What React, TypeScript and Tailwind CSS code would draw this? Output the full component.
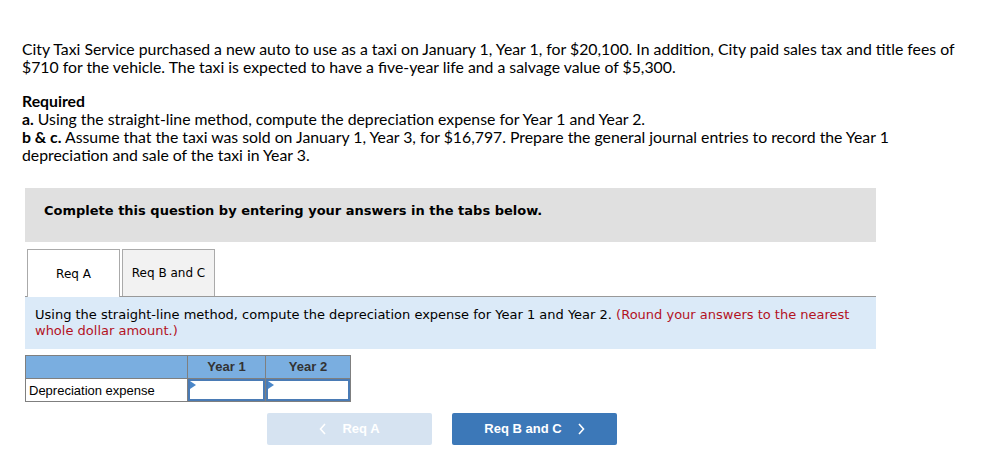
import React from 'react';

const bodyFont = { fontFamily: 'Lato, "Open Sans", sans-serif' };
const arial = { fontFamily: '"Liberation Sans", Arial, sans-serif' };

function AnswerCell() {
  return (
    <td className="relative h-[23px] border border-[#7f7f7f] p-0">
      <div className="h-full w-full border-2 border-[#4a7bb5] bg-white" />
      <span className="absolute left-[2px] top-[2px] h-0 w-0 border-y-[4px] border-l-[6px] border-y-transparent border-l-[#4a86c8]" />
    </td>
  );
}

function Chevron({ dir }: { dir: 'left' | 'right' }) {
  return (
    <svg width="8" height="12" viewBox="0 0 8 12" fill="none" stroke="white" strokeWidth="1.6">
      {dir === 'left' ? <polyline points="6,1 1.5,6 6,11" /> : <polyline points="2,1 6.5,6 2,11" />}
    </svg>
  );
}

export default function App() {
  return (
    <div className="min-h-[476px] bg-white pl-[22px] pr-[20px] pt-[40px] text-black">
      <div className="text-[15.8px] leading-[18px]" style={bodyFont}>
        <p className="w-[940px]">
          City Taxi Service purchased a new auto to use as a taxi on January 1, Year 1, for $20,100. In addition, City paid sales tax and title fees of
          $710 for the vehicle. The taxi is expected to have a five-year life and a salvage value of $5,300.
        </p>
        <p className="mt-[16px] w-[940px]">
          <b>Required</b>
          <br />
          <b>a.</b> Using the straight-line method, compute the depreciation expense for Year 1 and Year 2.
          <br />
          <b>b &amp; c.</b> Assume that the taxi was sold on January 1, Year 3, for $16,797. Prepare the general journal entries to record the Year 1
          depreciation and sale of the taxi in Year 3.
        </p>
      </div>

      <div className="ml-[3px] mt-[24px] w-[851px]" style={{ fontFamily: '"DejaVu Sans", Verdana, sans-serif' }}>
        <div className="flex h-[54px] items-center bg-[#e0e0e0] pb-[8px] pl-[19px] text-[13px] font-bold">
          Complete this question by entering your answers in the tabs below.
        </div>

        <div className="mt-[7px] flex items-end gap-[2px] border-b border-[#999] pl-[2px]">
          <div className="-mb-px flex h-[48px] w-[93px] items-center justify-center border border-b-0 border-[#aaa] bg-white text-[12px]">
            Req A
          </div>
          <div className="flex h-[47px] w-[93px] items-center justify-center border border-b-0 border-[#aaa] bg-[#f2f2f2] text-[12px]">
            Req B and C
          </div>
        </div>

        <div className="bg-[#dbeaf8] px-[10px] pb-[10px] pt-[10px] text-[13px] leading-[16px]">
          Using the straight-line method, compute the depreciation expense for Year 1 and Year 2.{' '}
          <span className="text-[#b3121f]">(Round your answers to the nearest whole dollar amount.)</span>
        </div>

        <table className="mt-[6px] border-collapse text-[13px]" style={arial}>
          <thead>
            <tr className="h-[23px] bg-[#7aaee0] font-bold text-[#333]">
              <th className="w-[162px] border border-[#7f7f7f]" />
              <th className="w-[78px] border border-[#7f7f7f]">Year 1</th>
              <th className="w-[85px] border border-[#7f7f7f]">Year 2</th>
            </tr>
          </thead>
          <tbody>
            <tr>
              <td className="h-[23px] border border-[#7f7f7f] px-[3px] pt-[2px] text-left">Depreciation expense</td>
              <AnswerCell />
              <AnswerCell />
            </tr>
          </tbody>
        </table>

        <div className="mt-[11px] flex gap-[20px] pl-[242px] text-[13px] font-bold text-white" style={arial}>
          <button className="flex h-[32px] w-[165px] items-center justify-center gap-[15px] rounded-[2px] bg-[#d6e3f1]">
            <Chevron dir="left" />
            <span>Req A</span>
          </button>
          <button className="flex h-[32px] w-[165px] items-center justify-center gap-[15px] rounded-[2px] bg-[#3c78b8]">
            <span>Req B and C</span>
            <Chevron dir="right" />
          </button>
        </div>
      </div>
    </div>
  );
}
